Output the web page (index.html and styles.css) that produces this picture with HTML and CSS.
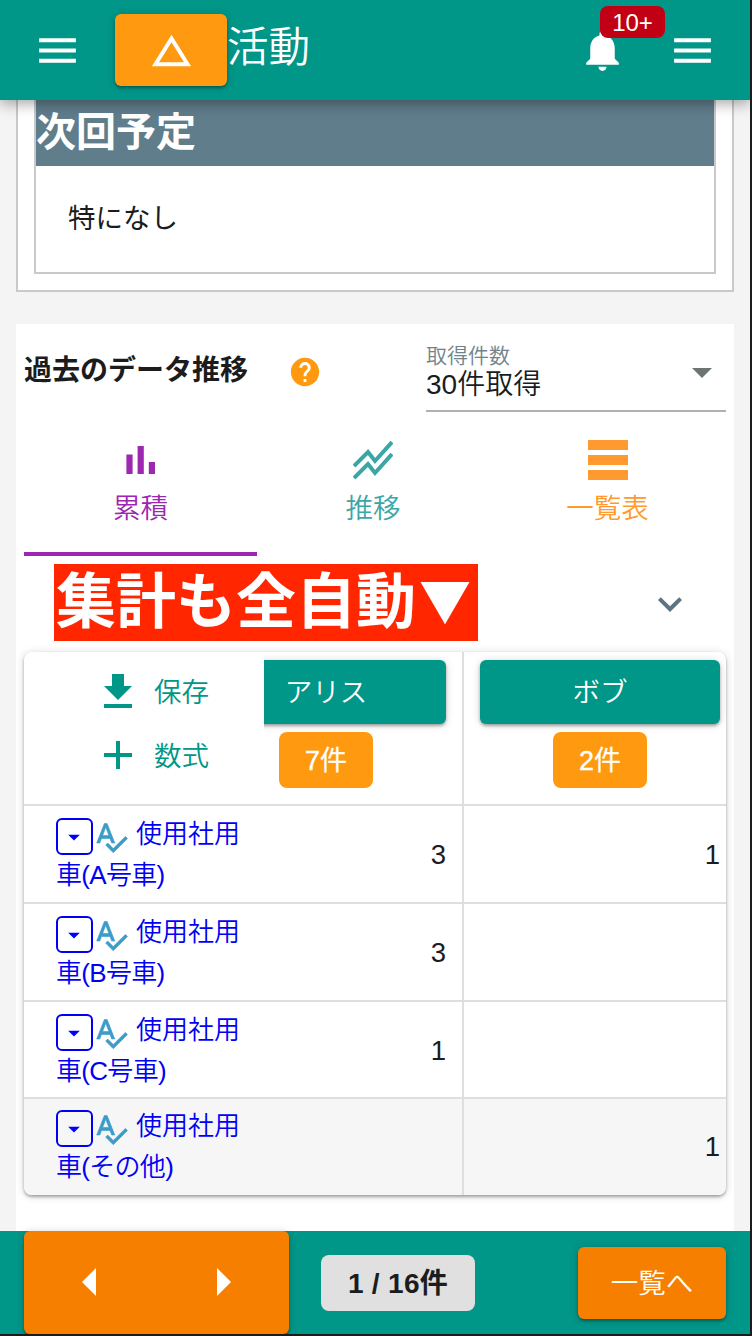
FILE: index.html
```
<!DOCTYPE html>
<html lang="ja">
<head>
<meta charset="utf-8" />
<meta name="viewport" content="width=device-width, initial-scale=1.0">
<title>活動</title>
<link rel="stylesheet" href="styles.css">
</head>
<body>
<svg class="defs">
  <symbol id="menu" viewBox="0 0 24 24"><path d="M3 18h18v-2H3v2zm0-5h18v-2H3v2zm0-7v2h18V6H3z"/></symbol>
  <symbol id="dropdown" viewBox="0 0 24 24"><path d="M7 10l5 5 5-5z"/></symbol>
  <symbol id="spellcheck" viewBox="0 0 24 24"><path d="M12.45 16h2.09L9.43 3H7.57L2.46 16h2.09l1.12-3h5.64l1.14 3zm-6.02-5L8.5 5.48 10.57 11H6.43zm15.16.59l-8.09 8.09L9.83 16l-1.41 1.41 5.09 5.09L23 13l-1.41-1.41z"/></symbol>
</svg>
<div class="app">
  <header class="topbar">
    <a href="#" class="menu-btn"><svg class="icon-menu"><use href="#menu"/></svg></a>
    <a href="#" class="btn btn-warning btn-up"><svg class="icon-up" viewBox="0 0 24 24"><path d="M12 7.77L18.39 18H5.61L12 7.77M12 4L2 20h20"/></svg></a>
    <h1 class="page-title">活動</h1>
    <a href="#" class="bell">
      <svg class="icon-bell" viewBox="0 0 24 24"><path d="M12 22c1.1 0 2-.9 2-2h-4c0 1.1.89 2 2 2zm6-6v-5c0-3.07-1.64-5.64-4.5-6.32V4c0-.83-.67-1.5-1.5-1.5s-1.5.67-1.5 1.5v.68C7.63 5.36 6 7.92 6 11v5l-2 2v1h16v-1l-2-2z"/></svg>
      <span class="badge">10+</span>
    </a>
    <a href="#" class="menu-btn"><svg class="icon-menu"><use href="#menu"/></svg></a>
  </header>

  <main class="content">
    <section class="report">
      <div class="report-item">
        <h2 class="report-title">次回予定</h2>
        <p class="report-text">特になし</p>
      </div>
    </section>

    <section class="history">
      <div class="history-head">
        <h3 class="history-title">過去のデータ推移</h3>
        <svg class="icon-help" viewBox="0 0 24 24"><path d="M12 2C6.48 2 2 6.48 2 12s4.48 10 10 10 10-4.48 10-10S17.52 2 12 2zm1 17h-2v-2h2v2zm2.07-7.75l-.9.92C13.45 12.9 13 13.5 13 15h-2v-.5c0-1.1.45-2.1 1.17-2.83l1.24-1.26c.37-.36.59-.86.59-1.41 0-1.1-.9-2-2-2s-2 .9-2 2H8c0-2.21 1.79-4 4-4s4 1.79 4 4c0 .88-.36 1.68-.93 2.25z"/></svg>
        <div class="select">
          <div class="select-body">
            <span class="select-label">取得件数</span>
            <span class="select-value">30件取得</span>
          </div>
          <svg class="icon-select"><use href="#dropdown"/></svg>
        </div>
      </div>

      <nav class="tabs">
        <a href="#" class="tab tab-total active">
          <svg class="icon-tab" viewBox="0 0 24 24"><path d="M4.7 9.2h3.1V19H4.7zM10.3 5h3.1v14h-3.1zM15.9 13H19v6h-3.1z"/></svg>
          <span>累積</span>
        </a>
        <a href="#" class="tab tab-trend">
          <svg class="icon-tab" viewBox="0 0 40 40"><path d="M1 26L15 12L22 21L39 2M1 38L15 24L22 33L39 14"/></svg>
          <span>推移</span>
        </a>
        <a href="#" class="tab tab-list">
          <svg class="icon-tab" viewBox="0 0 40 40"><path d="M0 0h40v10H0zM0 15h40v10H0zM0 30h40v10H0z"/></svg>
          <span>一覧表</span>
        </a>
      </nav>

      <div class="expand">
        <strong class="banner">集計も全自動<span>▼</span></strong>
        <svg class="icon-expand" viewBox="0 0 24 24"><path d="M7.41 8.59L12 13.17l4.59-4.58L18 10l-6 6-6-6z"/></svg>
      </div>

      <div class="table">
        <div class="tr tr-head">
          <div class="actions">
            <a href="#"><svg class="icon-action" viewBox="0 0 28 34"><path d="M8 0h12v12h8L14 26 0 12h8zM0 30h28v4H0z"/></svg><span>保存</span></a>
            <a href="#"><svg class="icon-action" viewBox="0 0 28 28"><path d="M12 0h4v12h12v4H16v12h-4V16H0v-4h12z"/></svg><span>数式</span></a>
          </div>
          <div class="person person-a">
            <div class="person-body"><a href="#" class="btn btn-name">アリス</a><span class="count">7件</span></div>
          </div>
          <div class="person person-b">
            <div class="person-body"><a href="#" class="btn btn-name">ボブ</a><span class="count">2件</span></div>
          </div>
        </div>
        <div class="tr">
          <div class="label"><span class="toggle"><svg><use href="#dropdown"/></svg></span><svg class="icon-spell"><use href="#spellcheck"/></svg>使用社用<br><span class="label-end">車(A号車)</span></div>
          <div class="num">3</div>
          <div class="num num-last">1</div>
        </div>
        <div class="tr">
          <div class="label"><span class="toggle"><svg><use href="#dropdown"/></svg></span><svg class="icon-spell"><use href="#spellcheck"/></svg>使用社用<br><span class="label-end">車(B号車)</span></div>
          <div class="num">3</div>
          <div class="num num-last"></div>
        </div>
        <div class="tr tr-short">
          <div class="label"><span class="toggle"><svg><use href="#dropdown"/></svg></span><svg class="icon-spell"><use href="#spellcheck"/></svg>使用社用<br><span class="label-end">車(C号車)</span></div>
          <div class="num">1</div>
          <div class="num num-last"></div>
        </div>
        <div class="tr tr-hover">
          <div class="label"><span class="toggle"><svg><use href="#dropdown"/></svg></span><svg class="icon-spell"><use href="#spellcheck"/></svg>使用社用<br><span class="label-end">車(その他)</span></div>
          <div class="num"></div>
          <div class="num num-last">1</div>
        </div>
      </div>
    </section>
  </main>

  <footer class="bottombar">
    <div class="pager">
      <a href="#"><svg viewBox="0 0 14 28"><path d="M14 0v28L0 14z"/></svg></a>
      <a href="#"><svg viewBox="0 0 14 28"><path d="M0 0v28l14-14z"/></svg></a>
    </div>
    <span class="page-count">1 / 16件</span>
    <a href="#" class="btn btn-list">一覧へ</a>
  </footer>
</div>
</body>
</html>
```
FILE: styles.css
```
:root {--teal: #009688; --orange: #ff9a10; --deep-orange: #f77f00; --purple: #9c27b0; --blue-grey: #607d8b; --text: #1a1c1e; --line: #dedede; --shadow: 0 2px 3px rgba(0,0,0,.3), 0 1px 8px rgba(0,0,0,.16);}
* {box-sizing: border-box;}
body {margin: 0; background: #1c1c1c; color: var(--text); font-family: "Liberation Sans", "Noto Sans CJK JP", sans-serif; font-size: 27.5px; font-weight: 350;}
a {color: inherit; text-decoration: none;}
h1, h2, h3, p {margin: 0;}
svg {display: block; fill: currentColor;}
.defs {display: none;}
.app {display: flex; flex-direction: column; width: 750px; height: 1334px; background: #f4f4f4; overflow: hidden;}
.btn {display: flex; align-items: center; justify-content: center; border-radius: 6px; color: #fff; box-shadow: var(--shadow);}

/* top bar */
.topbar {display: flex; align-items: center; flex: none; height: 100px; padding: 0 33px; background: var(--teal); color: #fff; box-shadow: 0 3px 14px rgba(0,0,0,.38); z-index: 1;}
.icon-menu {width: 49px; height: 49px;}
.btn-up {width: 112px; height: 72px; margin-left: 33px; background: var(--orange);}
.icon-up {width: 47px; height: 47px;}
.page-title {flex: 1; margin: -5px 0 0; font-size: 41.5px; font-weight: 350; line-height: 60px;}
.bell {position: relative; margin-right: 43px;}
.icon-bell {width: 49px; height: 49px;}
.badge {position: absolute; top: -20px; left: 22px; width: 65px; height: 32px; border-radius: 8px; background: #c10015; font-size: 24px; line-height: 34px; text-align: center;}
.bell + .menu-btn {margin-left: -2px;}

.content {flex: 1; padding: 0 16px; overflow: hidden;}

.report {height: 192px; margin-bottom: 32px; padding: 0 16px 16px; border: 2px solid #c9c9c9; border-top: 0; background: #fff;}
.report-item {height: 174px; border: 2px solid #c9c9c9; border-top: 0;}
.report-title {height: 66px; background: var(--blue-grey); color: #fff; font-size: 40px; font-weight: 700; line-height: 64px;}
.report-text {padding: 33px 32px; font-size: 27.5px; font-weight: 400; line-height: 40px;}

.history {height: 1000px; padding: 16px 8px; background: #fff;}
.history-head {display: flex; align-items: flex-start; height: 72px;}
.history-title {width: 264px; font-size: 28px; font-weight: 700; line-height: 62px;}
.icon-help {width: 34px; height: 34px; margin-top: 15px; color: var(--orange);}
.select {display: flex; align-items: center; width: 300px; height: 72px; margin-left: auto; border-bottom: 2px solid #b0b0b0;}
.select-body {flex: 1; display: flex; flex-direction: column; margin-top: -10px;}
.select-label {color: #70838c; font-size: 21px; line-height: 29px;}
.select-value {font-size: 28px; line-height: 29px;}
.icon-select {width: 48px; height: 48px; color: #6e7470; margin-top: -6px;}

.tabs {display: grid; grid-template-columns: 233px 232px 237px; height: 144px;}
.tab {display: flex; flex-direction: column; align-items: center; padding-top: 28px; line-height: 40px; gap: 9px;}
.tab.active {border-bottom: 4px solid currentColor;}
.tab-total {color: var(--purple);}
.tab-trend {color: #3ba6a6;}
.tab-list {color: #ff9a30;}
.icon-tab {width: 40px; height: 40px;}
.tab-total .icon-tab {width: 48px; height: 48px; margin: -4px 0;}
.tab-trend .icon-tab {fill: none; stroke: currentColor; stroke-width: 4;}

.expand {display: flex; align-items: flex-start; justify-content: space-between; height: 96px; padding: 8px 32px 0 30px;}
.banner {display: flex; width: 424px; height: 77px; padding-left: 2px; background: #ff2600; color: #fff; font-size: 60px; font-weight: 700; line-height: 78px; white-space: nowrap;}
.banner span {margin-left: 3px; font-family: "Noto Sans CJK JP", sans-serif; font-size: 52px; line-height: 70px;}
.icon-expand {width: 48px; height: 48px; margin-top: 16px; color: #5b7682;}

/* summary table */
.table {height: 543px; border-radius: 8px; background: #fff; overflow: hidden; box-shadow: var(--shadow);}
.tr {display: grid; grid-template-columns: 240px 200px 262px; height: 98px; border-bottom: 2px solid var(--line);}
.tr-head {height: 154px;}
.tr-short {height: 97px;}
.tr-hover {height: 96px; border: 0; background: #f6f6f6;}
.tr-hover .label {margin-top: -1px;}
.actions {padding: 8px 0 0 80px; color: var(--teal);}
.actions a {display: flex; align-items: center; gap: 22px; height: 64px;}
.actions span {margin-top: -4px;}
.icon-action {width: 28px; height: 34px; margin-top: -2px;}
.person {display: flex; justify-content: flex-end; padding-top: 8px; overflow: hidden;}
.person-a {padding-right: 16px; border-right: 2px solid var(--line);}
.person-b {padding-right: 6px;}
.person-body {flex: none; display: flex; flex-direction: column; align-items: center; gap: 8px; width: 240px;}
.btn-name {width: 100%; height: 64px; padding-bottom: 4px; background: var(--teal);}
.count {width: 94px; height: 56px; border-radius: 8px; background: var(--orange); color: #fff; font-size: 27px; line-height: 58px; text-align: center; -webkit-text-stroke: .4px #fff;}
.label {padding: 8px 0 0 32px; color: #0000f5; font-size: 26px; line-height: 41px; white-space: nowrap;}
.label-end {letter-spacing: -.7px;}
.toggle {display: inline-flex; align-items: center; justify-content: center; width: 37px; height: 37px; border: 2px solid currentColor; border-radius: 6px; vertical-align: middle; margin-bottom: -1px;}
.toggle svg {flex: none; width: 28px; height: 28px; margin-left: -1px;}
.icon-spell {display: inline-block; width: 36px; height: 36px; margin: 1px 7px 0 0; color: #3c9cc8; stroke: currentColor; stroke-width: .4; vertical-align: middle;}
.num {display: flex; align-items: center; justify-content: flex-end; padding: 2px 16px 0 0; border-right: 2px solid var(--line);}
.num-last {padding-right: 6px; border: 0;}
.tr-hover .num {padding-top: 0;}

/* bottom bar */
.bottombar {display: flex; align-items: center; flex: none; height: 103px; padding: 0 24px; background: var(--teal); color: #fff; z-index: 1;}
.pager {display: flex; align-items: center; justify-content: space-between; width: 265px; height: 103px; padding: 0 58px 2px; border-radius: 6px; background: var(--deep-orange); box-shadow: var(--shadow);}
.pager svg {width: 14px; height: 28px;}
.page-count {width: 154px; height: 56px; margin-left: 32px; border-radius: 8px; background: #e0e0e0; color: var(--text); font-size: 28px; font-weight: 700; letter-spacing: .3px; line-height: 58px; text-align: center;}
.btn-list {width: 148px; height: 72px; margin-left: auto; padding-bottom: 3px; background: var(--deep-orange);}
```
